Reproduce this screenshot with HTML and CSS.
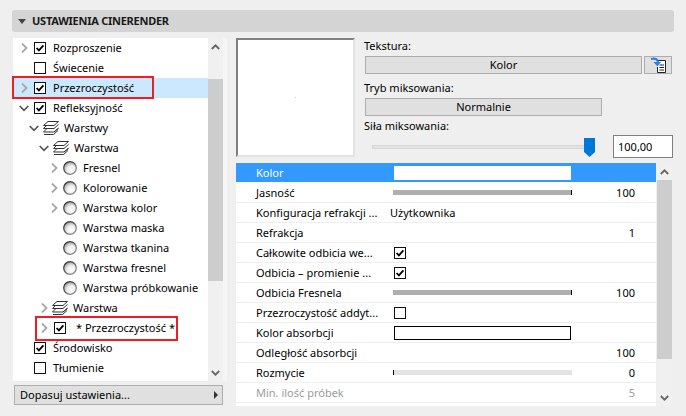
FILE: index.html
```html
<!DOCTYPE html>
<html lang="pl">
<head>
<meta charset="utf-8">
<title>Ustawienia Cinerender</title>
<link rel="stylesheet" href="styles.css">
</head>
<body>
<svg class="defs" width="0" height="0">
  <defs>
    <radialGradient id="ball" cx="0.62" cy="0.68" r="0.75">
      <stop offset="0" stop-color="#ffffff"/>
      <stop offset="0.5" stop-color="#ececec"/>
      <stop offset="1" stop-color="#8a8a8a"/>
    </radialGradient>
    <linearGradient id="ring" x1="0.2" y1="0.1" x2="0.8" y2="0.9">
      <stop offset="0" stop-color="#333333"/>
      <stop offset="1" stop-color="#8c8c8c"/>
    </linearGradient>
    <symbol id="cr" viewBox="0 0 7 10"><path d="M1 .5 5.500 5 1 9.500" fill="none" stroke="#a8a8a8" stroke-width="1.800"/></symbol>
    <symbol id="cd" viewBox="0 0 10 7"><path d="M.7 1 5 5.300 9.300 1" fill="none" stroke="#555" stroke-width="1.700"/></symbol>
    <symbol id="on" viewBox="0 0 12 12"><rect x=".5" y=".5" width="11" height="11" fill="#fff" stroke="#111"/><path d="M2.600 6 4.900 8.400 9.400 3.400" fill="none" stroke="#000" stroke-width="1.800"/></symbol>
    <symbol id="off" viewBox="0 0 12 12"><rect x=".5" y=".5" width="11" height="11" fill="#fff" stroke="#111"/></symbol>
    <symbol id="layers" viewBox="0 0 16 14"><path d="M5 .5H15.500L11 4.500H.5ZM3.500 4.500 .5 7.500H11L15.500 3.500M3.500 8 .5 11H11L15.500 7M11 11 15.500 7.500M1 13.500H10.500L15 9.500" fill="none" stroke="#333"/></symbol>
    <symbol id="sphere" viewBox="0 0 14 14"><circle cx="7" cy="7" r="6.300" fill="url(#ball)" stroke="url(#ring)" stroke-width="1.200"/></symbol>
    <symbol id="up" viewBox="0 0 9 6"><path d="M.8 5 4.500 1.300 8.200 5" fill="none" stroke="#666" stroke-width="1.800"/></symbol>
    <symbol id="down" viewBox="0 0 9 6"><path d="M.8 1 4.500 4.700 8.200 1" fill="none" stroke="#666" stroke-width="1.800"/></symbol>
  </defs>
</svg>

<header class="title-bar">
  <svg class="title-arrow" width="8" height="5" viewBox="0 0 8 5"><path d="M0 0H8L4 5Z" fill="#444"/></svg>
  <span>USTAWIENIA CINERENDER</span>
</header>

<main class="main">
  <section class="left">
    <div class="tree-wrap">
      <ul class="tree">
        <li class="row"><svg class="chev"><use href="#cr"/></svg><svg class="check"><use href="#on"/></svg><span>Rozproszenie</span></li>
        <li class="row"><span class="chev"></span><svg class="check"><use href="#off"/></svg><span>Świecenie</span></li>
        <li class="row selected"><svg class="chev"><use href="#cr"/></svg><svg class="check"><use href="#on"/></svg><span>Przezroczystość</span><i class="callout callout-a"></i></li>
        <li class="row"><svg class="chevd"><use href="#cd"/></svg><svg class="check"><use href="#on"/></svg><span>Refleksyjność</span></li>
        <li class="row l1"><svg class="chevd"><use href="#cd"/></svg><svg class="layer"><use href="#layers"/></svg><span>Warstwy</span></li>
        <li class="row l2"><svg class="chevd"><use href="#cd"/></svg><svg class="layer"><use href="#layers"/></svg><span>Warstwa</span></li>
        <li class="row l3"><svg class="chev"><use href="#cr"/></svg><svg class="ball"><use href="#sphere"/></svg><span>Fresnel</span></li>
        <li class="row l3"><svg class="chev"><use href="#cr"/></svg><svg class="ball"><use href="#sphere"/></svg><span>Kolorowanie</span></li>
        <li class="row l3"><svg class="chev"><use href="#cr"/></svg><svg class="ball"><use href="#sphere"/></svg><span>Warstwa kolor</span></li>
        <li class="row l3"><span class="chev"></span><svg class="ball"><use href="#sphere"/></svg><span>Warstwa maska</span></li>
        <li class="row l3"><span class="chev"></span><svg class="ball"><use href="#sphere"/></svg><span>Warstwa tkanina</span></li>
        <li class="row l3"><span class="chev"></span><svg class="ball"><use href="#sphere"/></svg><span>Warstwa fresnel</span></li>
        <li class="row l3"><span class="chev"></span><svg class="ball"><use href="#sphere"/></svg><span>Warstwa próbkowanie</span></li>
        <li class="row l2"><svg class="chev"><use href="#cr"/></svg><svg class="layer"><use href="#layers"/></svg><span>Warstwa</span></li>
        <li class="row l2"><svg class="chev"><use href="#cr"/></svg><svg class="check check-nested"><use href="#on"/></svg><span class="starred">* Przezroczystość *</span><i class="callout callout-b"></i></li>
        <li class="row"><span class="chev"></span><svg class="check"><use href="#on"/></svg><span>Środowisko</span></li>
        <li class="row"><span class="chev"></span><svg class="check"><use href="#off"/></svg><span>Tłumienie</span></li>
      </ul>
      <div class="scroll">
        <div class="arrow arrow-tree-up"><svg class="arrow-icon"><use href="#up"/></svg></div>
        <div class="thumb thumb-tree"></div>
        <div class="spacer"></div>
        <div class="arrow"><svg class="arrow-icon"><use href="#down"/></svg></div>
      </div>
    </div>
    <button class="fit-btn"><span>Dopasuj ustawienia...</span><svg width="4" height="8" viewBox="0 0 4 8"><path d="M0 0 4 4 0 8Z" fill="#333"/></svg></button>
  </section>

  <section class="right">
    <div class="top">
      <div class="preview"></div>
      <div class="form">
        <div class="label">Tekstura:</div>
        <div class="btn-row">
          <div class="btn btn-wide">Kolor</div>
          <div class="btn btn-icon">
            <svg width="17" height="17" viewBox="0 0 17 17">
              <path d="M7.500 3.500H15.500V15.500H7.500V10" fill="#fff" stroke="#222"/>
              <path d="M9.500 8H14M9.500 10.500H14M9.500 13H14" stroke="#222"/>
              <path d="M1 2C5 1 8 2 8 5.500" fill="none" stroke="#2f80e0" stroke-width="2.200"/>
              <path d="M3.500 5H11L7.500 9.500Z" fill="#2f80e0"/>
            </svg>
          </div>
        </div>
        <div class="label label-mix">Tryb miksowania:</div>
        <div class="btn btn-mode">Normalnie</div>
        <div class="label label-power">Siła miksowania:</div>
        <div class="slider-row">
          <div class="track">
            <svg class="knob" width="11" height="19" viewBox="0 0 11 19"><path d="M0 0H11V14L5.500 19 0 14Z" fill="#0078d7"/></svg>
          </div>
          <div class="num">100,00</div>
        </div>
      </div>
    </div>

    <div class="table-wrap">
      <div class="table">
        <div class="t-row active"><span class="name">Kolor</span><span class="swatch swatch-white"></span><span class="val"></span></div>
        <div class="t-row"><span class="name">Jasność</span><span class="bar bar-full"></span><span class="val">100</span></div>
        <div class="t-row"><span class="name">Konfiguracja refrakcji ...</span><span class="text-val">Użytkownika</span><span class="val"></span></div>
        <div class="t-row"><span class="name">Refrakcja</span><span></span><span class="val">1</span></div>
        <div class="t-row"><span class="name">Całkowite odbicia we...</span><svg class="check"><use href="#on"/></svg><span class="val"></span></div>
        <div class="t-row"><span class="name">Odbicia – promienie ...</span><svg class="check"><use href="#on"/></svg><span class="val"></span></div>
        <div class="t-row"><span class="name">Odbicia Fresnela</span><span class="bar bar-full"></span><span class="val">100</span></div>
        <div class="t-row"><span class="name">Przezroczystość addyt...</span><svg class="check"><use href="#off"/></svg><span class="val"></span></div>
        <div class="t-row"><span class="name">Kolor absorbcji</span><span class="swatch swatch-outline"></span><span class="val"></span></div>
        <div class="t-row"><span class="name">Odległość absorbcji</span><span></span><span class="val">100</span></div>
        <div class="t-row"><span class="name">Rozmycie</span><span class="bar bar-empty"></span><span class="val">0</span></div>
        <div class="t-row muted"><span class="name">Min. ilość próbek</span><span></span><span class="val">5</span></div>
      </div>
      <div class="scroll scroll-table">
        <div class="arrow"><svg class="arrow-icon"><use href="#up"/></svg></div>
        <div class="thumb thumb-table"></div>
        <div class="spacer"></div>
        <div class="arrow"><svg class="arrow-icon"><use href="#down"/></svg></div>
      </div>
    </div>
  </section>
</main>
</body>
</html>
```

FILE: styles.css
```css
* { box-sizing: border-box; }

html, body {
  margin: 0;
  height: 100%;
  overflow: hidden;
}

body {
  background: #efefef;
  color: #000;
  font: 11px/16px "Noto Sans", sans-serif;
  padding-top: 10px;
}

.defs { position: absolute; }

.title-bar {
  display: flex;
  align-items: center;
  gap: 6px;
  height: 22px;
  width: 662px;
  margin-left: 12px;
  padding-left: 6px;
  background: #d4d4d4;
  border-radius: 3px;
  font-weight: 700;
  letter-spacing: -0.25px;
  color: #1a1a1a;
}

.main {
  display: flex;
  gap: 9px;
  margin: 6px 0 0 13px;
}

/* left column */
.left { width: 214px; }

.tree-wrap {
  display: flex;
  height: 343px;
  background: #f5f5f5;
}

.tree {
  list-style: none;
  margin: 0;
  padding: 0;
  width: 195px;
  background: #fff;
}

.row {
  position: relative;
  display: flex;
  align-items: center;
  height: 20px;
  padding-left: 8px;
  white-space: nowrap;
}

.row.l1 { padding-left: 18px; }
.row.l2 { padding-left: 28px; }
.row.l3 { padding-left: 38px; }

.selected { background: #cce8ff; }

.chev { width: 7px; height: 10px; flex: none; margin-right: 6px; }
.chevd { width: 10px; height: 7px; flex: none; margin: 0 5px 0 -2px; }
.check { width: 12px; height: 12px; flex: none; }
.check + span { margin-left: 7px; }
.check + .starred { margin-left: 10px; }
.check-nested { margin-left: 0; }
.layer { width: 16px; height: 14px; flex: none; margin-right: 5px; }
.row.l1 .chevd, .row.l2 .chevd { margin-right: 4px; }
.row.l2 .chev { margin-right: 4px; }
.row.l2 .check-nested { margin-left: 2px; }
.ball { width: 14px; height: 14px; flex: none; margin: 0 6px 0 5px; }
.row.l3 .chev { margin-right: 0; }

.callout {
  position: absolute;
  border: 2px solid #ee1c25;
  pointer-events: none;
}

.callout-a { left: -1px; top: -2px; width: 142px; height: 23px; }
.callout-b { left: 22px; top: -2px; width: 143px; height: 25px; }

.scroll {
  display: flex;
  flex-direction: column;
  width: 15px;
  flex: none;
  background: #f0f0f0;
}

.scroll-table { margin-left: 1px; }

.arrow {
  display: flex;
  align-items: center;
  justify-content: center;
  height: 17px;
}

.arrow-tree-up { height: 41px; padding-bottom: 23px; }
.arrow-icon { width: 9px; height: 6px; }
.thumb { background: #cdcdcd; }
.thumb-tree { height: 202px; }
.thumb-table { height: 179px; }
.spacer { flex: 1; }

.fit-btn {
  display: flex;
  align-items: center;
  justify-content: space-between;
  width: 209px;
  height: 20px;
  margin: 4px 0 0 1px;
  padding: 0 4px 0 5px;
  background: #e0e0e0;
  border: 1px solid #adadad;
  font: inherit;
  color: #000;
}

/* right column */
.right { width: 437px; }

.top { display: flex; height: 125px; }

.preview {
  display: flex;
  align-items: center;
  justify-content: center;
  width: 119px;
  height: 119px;
  background: #fff;
  border: 2px solid #e3e3e3;
  border-top-color: #808080;
  border-left-color: #808080;
}

.preview::after {
  content: "";
  width: 1px;
  height: 1px;
  background: #d0d0d0;
}

.form { margin-left: 9px; width: 309px; }
.label { height: 16px; margin-bottom: 2px; }
.label-mix { margin-top: 6px; }
.label-power { margin-top: 2px; margin-bottom: 1px; }

.btn-row { display: flex; gap: 2px; margin-left: 1px; }

.btn {
  display: flex;
  align-items: center;
  justify-content: center;
  height: 18px;
  background: #e0e0e0;
  border: 1px solid #adadad;
}

.btn-wide { width: 277px; }
.btn-icon { width: 28px; }
.btn-mode { width: 237px; margin-left: 1px; }

.slider-row {
  display: flex;
  align-items: center;
  height: 23px;
  margin-left: 8px;
}

.track {
  position: relative;
  width: 218px;
  height: 4px;
  background: #e3e3e3;
  border: 1px solid #d6d6d6;
}

.knob { position: absolute; left: 211px; top: -8px; }

.num {
  width: 60px;
  height: 23px;
  margin-left: 23px;
  padding-left: 4px;
  background: #fff;
  border: 1px solid #808080;
  line-height: 21px;
}

.table-wrap { display: flex; }

.table {
  width: 420px;
  height: 243px;
  background: #fff;
}

.t-row {
  display: grid;
  grid-template-columns: 138px 178px 63px;
  align-items: center;
  height: 20px;
  padding-left: 20px;
  border-bottom: 1px solid #efefef;
  white-space: nowrap;
}

.active {
  background: #3399ff;
  border-bottom-color: #fff;
  color: #fff;
}

.muted { color: #9c9c9c; }

.val { text-align: right; }
.text-val { margin-left: -4px; }

.swatch { display: block; height: 14px; width: 177px; }
.swatch-white { background: #fff; }
.swatch-outline { background: #fff; border: 1px solid #000; }

.bar { display: block; height: 5px; width: 179px; margin-left: -1px; }
.bar-full { background: #afafaf; border-right: 1px solid #000; }
.bar-empty { background: #e3e3e3; border-left: 1px solid #000; }
```
